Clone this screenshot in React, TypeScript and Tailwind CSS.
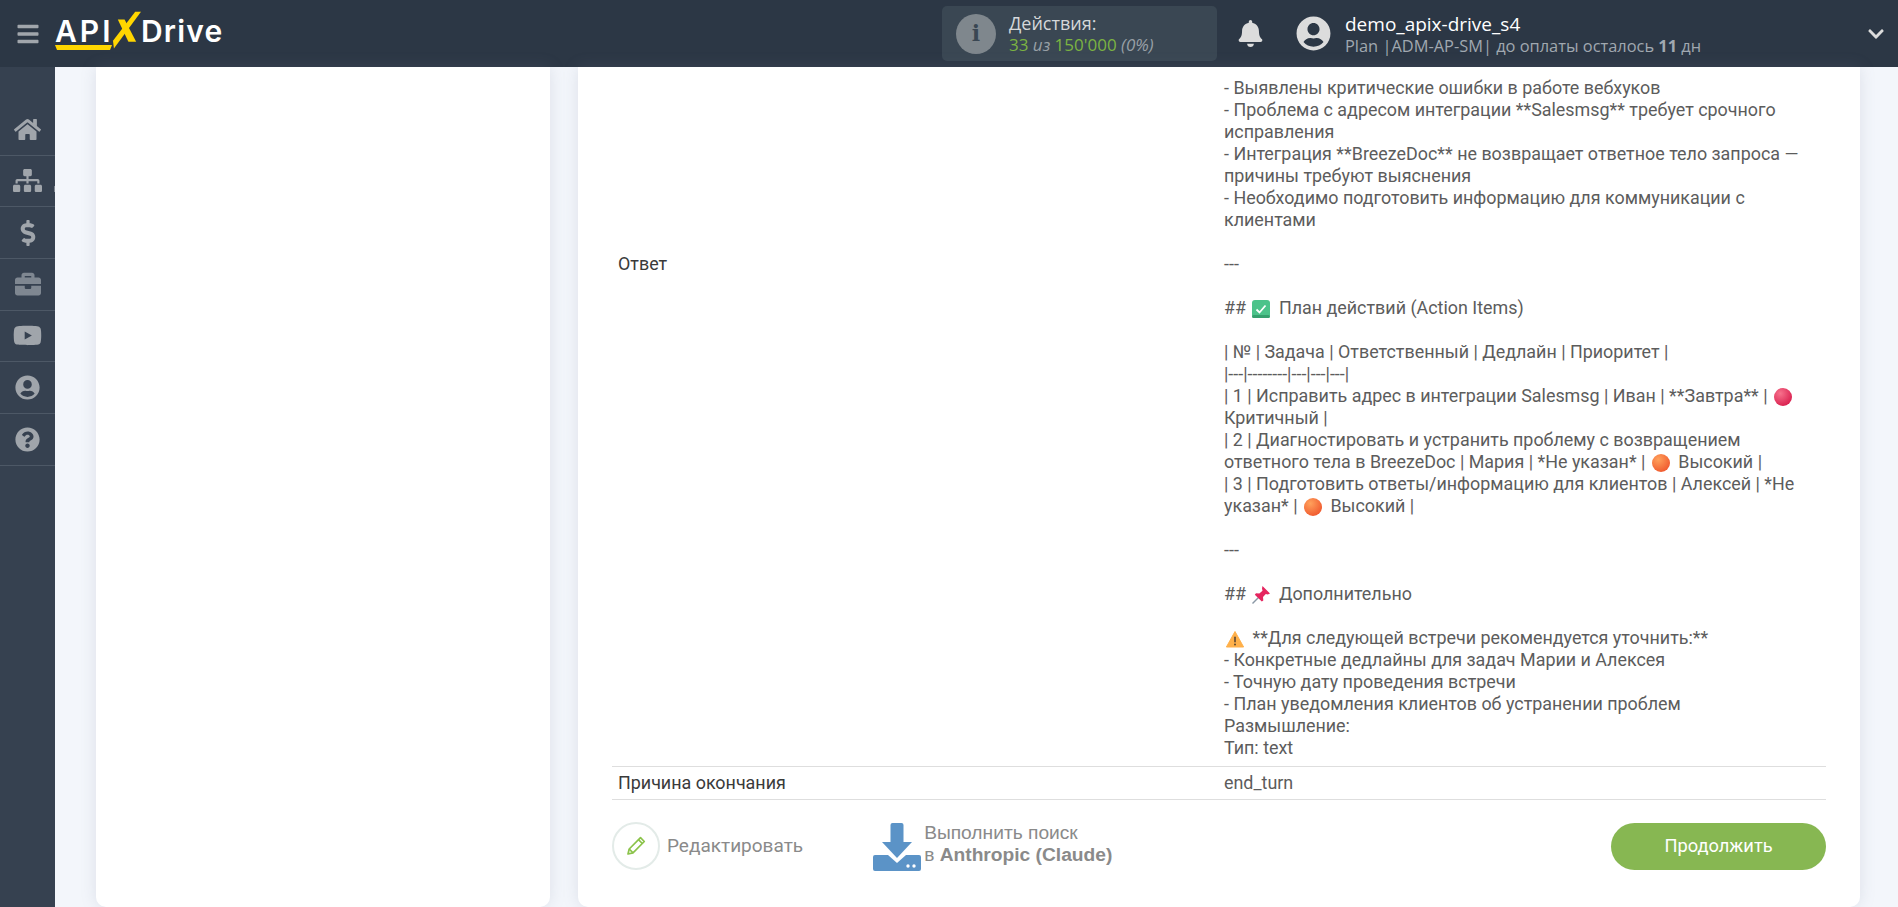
import {
  FaBars,
  FaBell,
  FaBriefcase,
  FaChevronDown,
  FaDollarSign,
  FaHome,
  FaQuestionCircle,
  FaSitemap,
  FaUserCircle,
  FaYoutube,
} from "react-icons/fa";
import type { IconType } from "react-icons";

const menu: { icon: IconType; size: string; dim?: boolean }[] = [
  { icon: FaHome, size: "text-[27px]" },
  { icon: FaSitemap, size: "text-[29px]" },
  { icon: FaDollarSign, size: "text-[26px]" },
  { icon: FaBriefcase, size: "text-[26px]", dim: true },
  { icon: FaYoutube, size: "text-[29px]" },
  { icon: FaUserCircle, size: "text-[25px]" },
  { icon: FaQuestionCircle, size: "text-[25px]" },
];

const Logo = () => (
  <div className="relative flex h-[67px] w-[170px] shrink-0 items-center font-['Inter',sans-serif] text-[30px] font-semibold text-white">
    <span className="mt-[-4px] w-[57px] tracking-[3px]">API</span>
    <svg viewBox="0 0 30 42" className="mt-[-6px] h-[42px] w-[29px] shrink-0">
      <polygon points="24,1 30,1 2,39 1,31" fill="#ffd600" />
      <polygon points="6,9 13,9 25,32 17,32" fill="#ffd600" />
    </svg>
    <span className="mt-[-4px] tracking-[1.2px]">Drive</span>
    <svg viewBox="0 0 57 5" className="absolute left-0 top-[45px] h-[5px] w-[57px]">
      <polygon points="0,0 57,0 55,5 2,5" fill="#ffd600" />
    </svg>
  </div>
);

const Emoji = ({ kind }: { kind: "check" | "red" | "orange" | "pin" | "warn" }) => (
  <svg viewBox="0 0 18 18" className="-my-[4px] ml-[2px] mr-[4px] inline-block h-[18px] w-[18px] align-middle">
    <defs>
      <radialGradient id="redG" cx="35%" cy="30%" r="75%">
        <stop offset="0" stopColor="#f7718c" />
        <stop offset="1" stopColor="#d91f4e" />
      </radialGradient>
      <radialGradient id="orangeG" cx="35%" cy="30%" r="75%">
        <stop offset="0" stopColor="#ffa15c" />
        <stop offset="1" stopColor="#f0592e" />
      </radialGradient>
    </defs>
    {kind === "check" && (
      <>
        <rect x="0" y="0" width="18" height="18" rx="3" fill="#4cc38a" />
        <rect x="0" y="15" width="18" height="3" rx="1.5" fill="#36a06e" />
        <path d="M4.500 9.500l3 3 6-7" fill="none" stroke="#fff" strokeWidth="1.8" />
      </>
    )}
    {kind === "red" && <circle cx="9" cy="9" r="9" fill="url(#redG)" />}
    {kind === "orange" && <circle cx="9" cy="9" r="9" fill="url(#orangeG)" />}
    {kind === "pin" && (
      <>
        <path d="M0.500 17.500l6.500-6.500" stroke="#8a98a5" strokeWidth="1.4" />
        <path d="M10.500 0L18 7.500l-2.200 1-2-.6-2.800 3.200.3 3.300-1.500 1.100L2.800 8.800l1.200-1.500 3.300.2L10.500 4.700 10 2.500z" fill="#e5255f" />
      </>
    )}
    {kind === "warn" && (
      <>
        <path d="M9 1.500L17.600 17H.4z" fill="#ffb04a" stroke="#ffb04a" strokeLinejoin="round" />
        <rect x="8.200" y="6.500" width="1.600" height="6" rx=".8" fill="#5a4632" />
        <circle cx="9" cy="14.400" r="1" fill="#5a4632" />
      </>
    )}
  </svg>
);

const Answer = () => (
  <div className="whitespace-pre-line">
    {`- Выявлены критические ошибки в работе вебхуков
- Проблема с адресом интеграции **Salesmsg** требует срочного исправления
- Интеграция **BreezeDoc** не возвращает ответное тело запроса — причины требуют выяснения
- Необходимо подготовить информацию для коммуникации с клиентами

---

## `}
    <Emoji kind="check" />
    {` План действий (Action Items)

| № | Задача | Ответственный | Дедлайн | Приоритет |
|---|--------|---|---|---|
| 1 | Исправить адрес в интеграции Salesmsg | Иван | **Завтра** | `}
    <Emoji kind="red" />
    {` Критичный |
| 2 | Диагностировать и устранить проблему с возвращением ответного тела в BreezeDoc | Мария | *Не указан* | `}
    <Emoji kind="orange" />
    {` Высокий |
| 3 | Подготовить ответы/информацию для клиентов | Алексей | *Не указан* | `}
    <Emoji kind="orange" />
    {` Высокий |

---

## `}
    <Emoji kind="pin" />
    {` Дополнительно

`}
    <Emoji kind="warn" />
    {` **Для следующей встречи рекомендуется уточнить:**
- Конкретные дедлайны для задач Марии и Алексея
- Точную дату проведения встречи
- План уведомления клиентов об устранении проблем
Размышление:
Тип: text`}
  </div>
);

export default function App() {
  return (
    <div className="flex h-[907px] flex-col overflow-hidden bg-[#f3f6fb] font-['Roboto',sans-serif]">
      <header className="flex h-[67px] shrink-0 items-center bg-[#2c3745]">
        <div className="flex w-[55px] shrink-0 justify-center pl-[1px]">
          <FaBars className="text-[24px] text-[#a1a6ac]" />
        </div>
        <Logo />
        <div className="ml-[717px] flex h-[55px] w-[275px] shrink-0 items-center rounded-[5px] bg-[#3a4753] pl-[14px] font-['Open_Sans',sans-serif]">
          <div className="flex h-[40px] w-[40px] items-center justify-center rounded-full bg-[#7f878d]">
            <span className="font-['DejaVu_Serif',serif] text-[22px] font-bold text-[#3a4753]">i</span>
          </div>
          <div className="ml-[13px] leading-[22px]">
            <div className="text-[18px] text-[#d5d8da]">Действия:</div>
            <div className="text-[17px] text-[#7cb342]">
              33 <span className="italic text-[#98a0a6]">из</span> 150'000{" "}
              <span className="italic text-[#98a0a6]">(0%)</span>
            </div>
          </div>
        </div>
        <FaBell className="ml-[20px] shrink-0 text-[27px] text-[#dcdcdc]" />
        <FaUserCircle className="ml-[32px] shrink-0 text-[35px] text-[#dcdcdc]" />
        <div className="ml-[14px] font-['Open_Sans',sans-serif]">
          <div className="text-[19px] leading-[24px] text-white">demo_apix-drive_s4</div>
          <div className="text-[16.4px] leading-[19px] text-[#a0a8b0]">
            Plan |ADM-AP-SM| до оплаты осталось <b>11</b> дн
          </div>
        </div>
        <FaChevronDown className="ml-auto mr-[13px] text-[18px] text-[#dcdcdc]" />
      </header>

      <div className="flex min-h-0 flex-1">
        <nav className="w-[55px] shrink-0 bg-[#364150] pt-[37px]">
          {menu.map((item, index) => (
            <div
              key={index}
              className="relative flex h-[51.67px] items-center justify-center border-b border-[#4d5866]"
            >
              <item.icon className={`${item.size} ${item.dim ? "text-[#7f8791]" : "text-[#a0a5ab]"}`} />
              {index === 1 && <div className="absolute right-0 top-[30px] h-[6px] w-[1px] bg-[#7f8791]" />}
            </div>
          ))}
        </nav>

        <main className="flex min-w-0 flex-1 pl-[41px]">
          <div className="w-[454px] shrink-0 rounded-b-[10px] bg-white shadow-[0_0_16px_rgba(120,130,150,0.18)]" />
          <div className="ml-[28px] w-[1282px] shrink-0 rounded-b-[10px] bg-white px-[34px] shadow-[0_0_16px_rgba(120,130,150,0.18)]">
            <div className="text-[17.9px] leading-[22px] text-[#5c5c5c]">
              <div className="flex border-b border-[#dedede] pb-[7px] pt-[10px]">
                <div className="w-[612px] shrink-0 pl-[6px] pt-[176px] text-[#3a3a3a]">Ответ</div>
                <div className="min-w-0 flex-1">
                  <Answer />
                </div>
              </div>
              <div className="flex h-[33px] items-center border-b border-[#dedede] pb-[1px]">
                <div className="w-[612px] shrink-0 pl-[6px] text-[#3a3a3a]">Причина окончания</div>
                <div>end_turn</div>
              </div>
            </div>

            <div className="mt-[21px] flex items-center">
              <div className="flex h-[48px] w-[48px] items-center justify-center rounded-full border-2 border-[#e3ebe8]">
                <svg viewBox="0 0 24 24" className="h-[24px] w-[24px]" fill="none" stroke="#8bc34a" strokeWidth="1.7" strokeLinejoin="round">
                  <path d="M4 20l1.200-5L16.500 3.700l3.800 3.800L9 18.800z" />
                  <path d="M14.500 5.700l3.800 3.800M5.200 15l3.800 3.800" />
                </svg>
              </div>
              <span className="ml-[7px] text-[19px] text-[#8a8a8a]">Редактировать</span>
              <svg viewBox="0 0 48 48" className="ml-[70px] mt-[2px] h-[48px] w-[48px]" fill="#5b93c7">
                <path d="M17.500 2a2 2 0 012-2h9a2 2 0 012 2v17H39L24 35 9 19h8.500z" />
                <path d="M2 32h13l9 8 9-8h13a2 2 0 012 2v12a2 2 0 01-2 2H2a2 2 0 01-2-2V34a2 2 0 012-2z" />
                <circle cx="35" cy="43" r="1.700" fill="#fff" />
                <circle cx="41" cy="43" r="1.700" fill="#fff" />
              </svg>
              <div className="ml-[3px] mt-[-4px] font-['Liberation_Sans',sans-serif] text-[19.2px] leading-[22px] text-[#8a8a8a]">
                <div>Выполнить поиск</div>
                <div>
                  в <b>Anthropic (Claude)</b>
                </div>
              </div>
              <button className="ml-auto h-[47px] w-[215px] rounded-full bg-[#87b752] text-[18.3px] font-normal text-white">
                Продолжить
              </button>
            </div>
          </div>
        </main>
      </div>
    </div>
  );
}
